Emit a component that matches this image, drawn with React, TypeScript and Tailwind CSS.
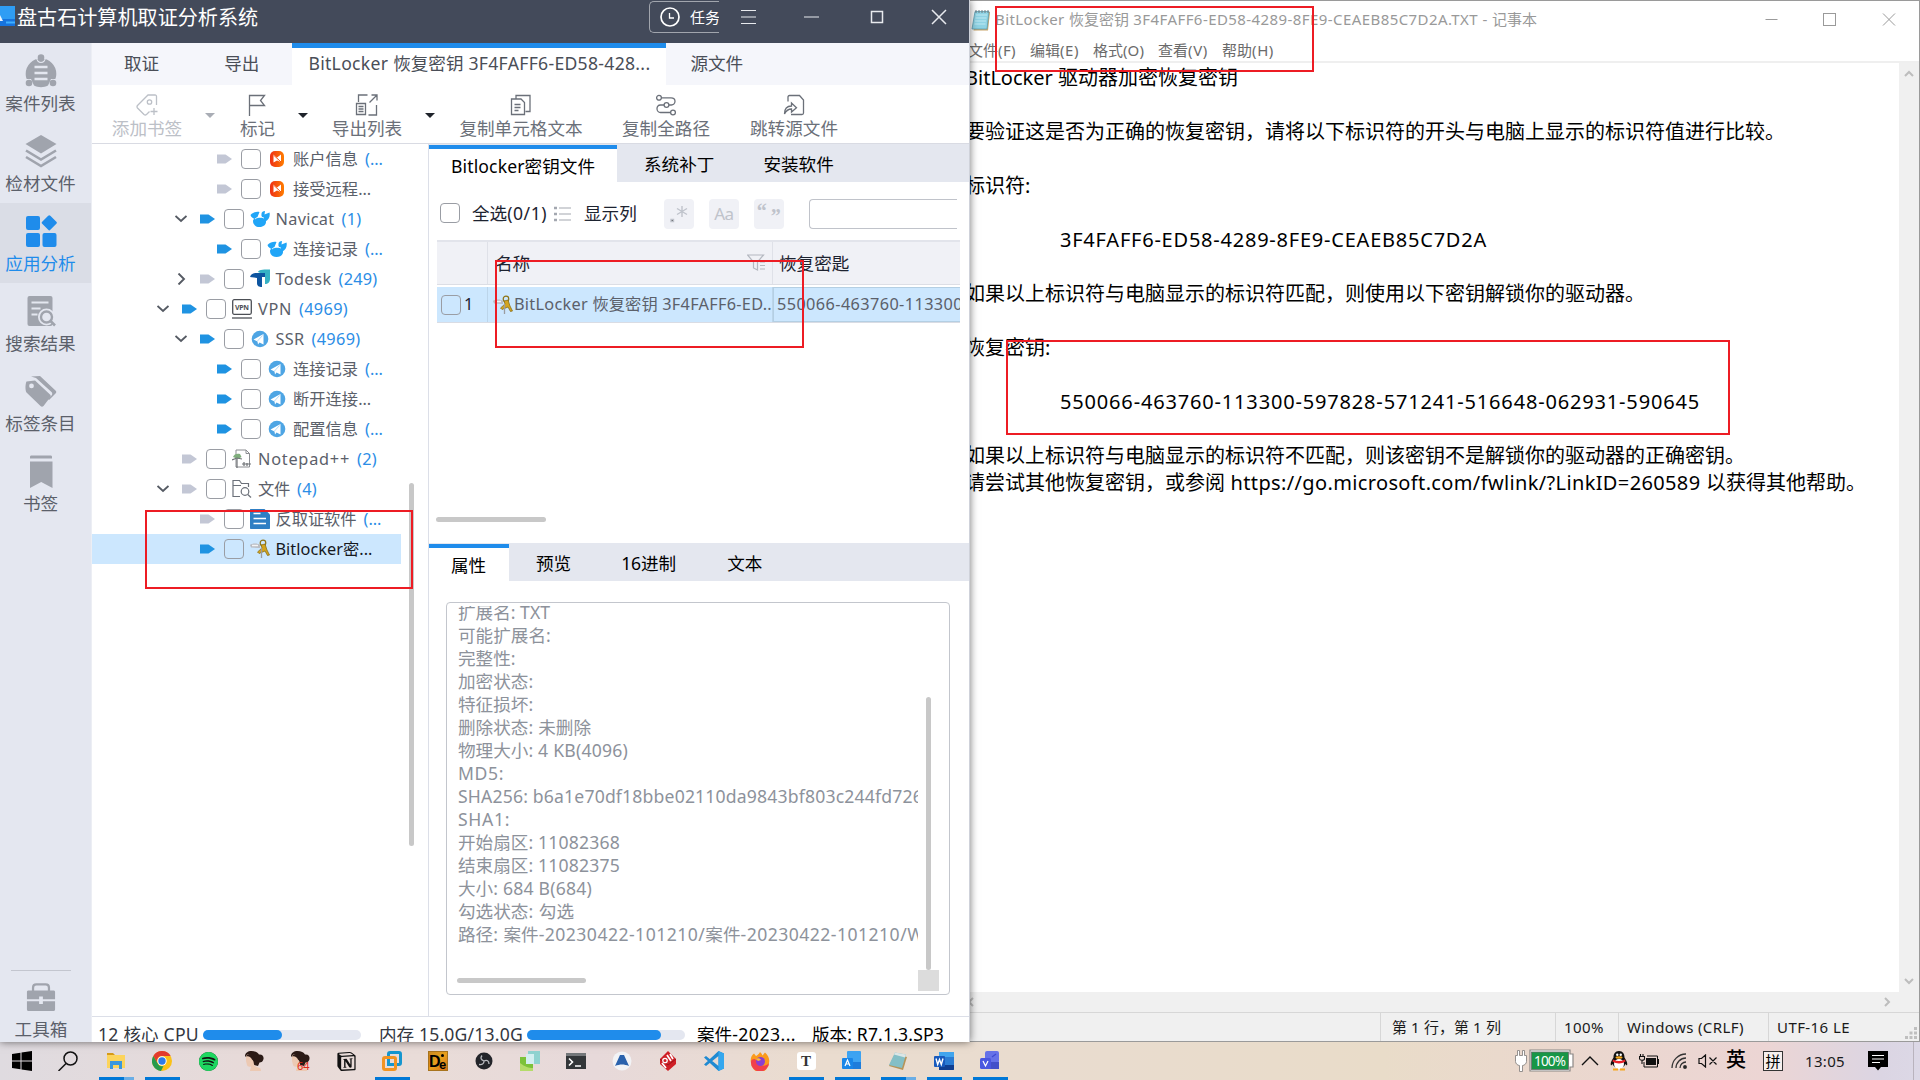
import { useLayoutEffect, useRef, useState } from "react";
import type { ReactNode } from "react";
import { SiNotion, SiSpotify } from "react-icons/si";

/** One line of text; `w` spreads the Latin runs (or all glyphs) over a fixed measure. */
function T({ t, w, c = "" }: { t: string; w?: number; c?: string }) {
  const ref = useRef<HTMLSpanElement>(null);
  const [ls, setLs] = useState(0);
  const runs = t.match(/[\x20-\x7e]+|[^\x20-\x7e]+/g) ?? [];
  const latin = runs.filter((r) => r.charCodeAt(0) < 127).join("").length;
  useLayoutEffect(() => {
    if (w && ref.current) {
      const d = w - ref.current.getBoundingClientRect().width;
      setLs(d / (latin || t.length));
    }
  }, []);
  return (
    <span ref={ref} className={"inline-block shrink-0 whitespace-pre " + c}>
      {runs.map((r, i) => {
        const spaced = !latin || r.charCodeAt(0) < 127;
        return (
          <span key={i} style={spaced ? { letterSpacing: ls } : undefined}>
            {r}
          </span>
        );
      })}
    </span>
  );
}

type P = { className?: string };

/* ---------- sidebar icons ---------- */
const CaseIcon = () => (
  <svg width="32" height="34" viewBox="0 0 32 34" fill="#a0a4ad">
    <circle cx="16" cy="3.5" r="3.3" />
    <path d="M16 4.5A15.3 15.3 0 0 0 .7 19.8c0 2 .3 3.800 1 5.200L6 25l3 6.500c2 1.200 4.500 1.700 7 1.700s5-.5 7-1.700L26 25l4.300 0c.7-1.400 1-3.200 1-5.200A15.300 15.300 0 0 0 16 4.500z" />
    <circle cx="4" cy="29" r="3.300" />
    <circle cx="28" cy="29" r="3.300" />
    <path d="M9.500 13h13M9.500 19h13M9.500 25h13" stroke="#e4e7f0" strokeWidth="2.600" />
    <path d="M11.500 2.500c0 8 9 8 9 0" fill="none" stroke="#e4e7f0" strokeWidth="1.200" />
  </svg>
);
const LayersIcon = () => (
  <svg width="32" height="34" viewBox="0 0 32 34" fill="#a0a4ad">
    <path d="M16 1l15.500 9L16 19.500.500 10z" />
    <path d="M1 16.500l15 9 15-9M1 23l15 9 15-9" fill="none" stroke="#a0a4ad" strokeWidth="2.600" />
  </svg>
);
const AppsIcon = () => (
  <svg width="32" height="34" viewBox="0 0 32 34" fill="#1f8ceb">
    <rect x="1" y="2" width="14" height="14" rx="2" />
    <rect x="1" y="19" width="14" height="14" rx="2" />
    <rect x="17.500" y="19" width="14" height="14" rx="2" />
    <rect x="18.500" y="3" width="11.500" height="11.500" rx="1.500" transform="rotate(45 24.200 8.800)" />
  </svg>
);
const SearchDocIcon = () => (
  <svg width="32" height="34" viewBox="0 0 32 34">
    <rect x="2.500" y="2" width="25" height="30" rx="2" fill="#a0a4ad" />
    <path d="M6.500 8.500h17M6.500 14.500h9M6.500 20.500h6" stroke="#e4e7f0" strokeWidth="2.200" />
    <circle cx="21.500" cy="23" r="8.500" fill="#e4e7f0" />
    <circle cx="21.500" cy="23" r="5.500" fill="none" stroke="#a0a4ad" strokeWidth="2.400" />
    <path d="M25.500 27l4.500 4.500" stroke="#a0a4ad" strokeWidth="2.600" />
  </svg>
);
const TagsIcon = () => (
  <svg width="32" height="34" viewBox="0 0 32 34" fill="#a0a4ad">
    <path d="M6 2.500L15 2l15.500 14.500c1 1 1 2 0 3L24 26l-1-1 3.500-3.500c1-1 1-2.500 0-3.500L11 4z" />
    <path d="M1.500 7.500L10 6.500l15 14c1 1 1 2 0 3L18.500 32c-1 1-2 1-3 0L1.500 18.500C0 16 .300 10 1.500 7.500zM6.500 9.500a2.400 2.400 0 1 0 0 4.800 2.400 2.400 0 0 0 0-4.800z" fillRule="evenodd" />
  </svg>
);
const BookmarkIcon = () => (
  <svg width="32" height="34" viewBox="0 0 32 34" fill="#a0a4ad">
    <path d="M5 4.500V3c0-1 .5-1.500 1.500-1.500h19c1 0 1.500.5 1.500 1.500v1.500zM5 7.500h22.500V34L16.200 28 5 34z" />
  </svg>
);
const ToolboxIcon = () => (
  <svg width="32" height="32" viewBox="0 0 32 32">
    <path d="M7.500 10V6c0-2.500 1.500-3.500 3.500-3.500h10c2 0 3.500 1 3.500 3.500v4" fill="none" stroke="#a0a4ad" strokeWidth="2.400" />
    <path d="M1 10.500c0-1 1-1.500 2-1.500h26c1 0 2 .5 2 1.500v8H18v-3h-4v3H1zM1 20.500h13v3h4v-3h13V29c0 1.500-1 2-2 2H3c-1 0-2-.5-2-2z" fill="#a0a4ad" />
  </svg>
);

/* ---------- toolbar icons ---------- */
const line = { fill: "none", stroke: "#6b7079", strokeWidth: 1.3 };
const AddTag = () => (
  <svg width="22" height="22" viewBox="0 0 22 22" {...line} stroke="#bcc0c7">
    <path d="M20.500 11V2.500c0-1-.5-1.500-1.500-1.500h-7L1.500 11.500c-.8 1-.8 1.500 0 2.500l6.500 6.500c1 .8 1.500.8 2.500 0l3-3M18 14v7M14.500 17.500h7" />
    <circle cx="13.500" cy="8" r="2.200" />
  </svg>
);
const Flag = () => (
  <svg width="22" height="22" viewBox="0 0 22 22" {...line}>
    <path d="M2.500 22V1.500h15l-4 5 4 5h-15" />
  </svg>
);
const ExportIcon = () => (
  <svg width="24" height="22" viewBox="0 0 24 22" {...line}>
    <path d="M3.500 8V1h9M21.500 11v10h-8M14.500 8.500L22 1M16.500 1H22v5.500M1.500 9.500h9v11h-9zM3.500 12.500h5M3.500 15h5M3.500 17.500h5" />
  </svg>
);
const CopyIcon = () => (
  <svg width="22" height="22" viewBox="0 0 22 22" {...line}>
    <path d="M6 4.500V1.500h14v16h-4.500M1.500 5h9.500l3.500 3.500v12h-13zM4.500 10.500h6M4.500 13.500h6M4.500 16.500h4" />
  </svg>
);
const PathIcon = () => (
  <svg width="22" height="22" viewBox="0 0 22 22" {...line}>
    <circle cx="4" cy="3.800" r="2.400" />
    <circle cx="11.500" cy="11" r="2.400" />
    <circle cx="18" cy="18.500" r="2.400" />
    <path d="M6.500 3.800H16c2 0 4 1 4 3.500S18 11 16.500 11H14M9 11H5.500C3 11 2 12.800 2 14.700s1.500 3.800 3.500 3.800h10" />
  </svg>
);
const JumpIcon = () => (
  <svg width="22" height="22" viewBox="0 0 22 22" {...line}>
    <path d="M5 7.500V3c0-1 .5-1.500 1.500-1.500h10l4 4.500V19c0 1-.5 1.500-1.500 1.500H8M1.500 20c0-5 2-8 7-8V9l5 4.800-5 4.200v-3c-3.500 0-5.500 2-7 5z" />
  </svg>
);
const Caret = ({ c }: { c: string }) => (
  <svg width="10" height="5" viewBox="0 0 10 5" className="mt-[3px] shrink-0">
    <path d="M0 0h10L5 5z" fill={c} />
  </svg>
);

/* ---------- tree icons ---------- */
const Sun = () => (
  <svg width="20" height="20" viewBox="0 0 20 20">
    <defs>
      <linearGradient id="sun" x1="0" x2="1"><stop offset="0" stopColor="#ee2f14" /><stop offset="1" stopColor="#ff7d00" /></linearGradient>
    </defs>
    <rect x="3" y="2" width="14" height="16" rx="5" fill="url(#sun)" />
    <path d="M6.500 5.500l3.500 3 4-3V13l-4-1.500-3.500 2z" fill="#fff" />
    <path d="M6.500 6l7.500 7" stroke="#f4510b" strokeWidth="1" />
  </svg>
);
const Navicat = () => (
  <svg width="20" height="20" viewBox="0 0 20 20" fill="#20a5f7">
    <path d="M.500 6C3 3 7 2.500 9.500 3L7.500 8 5 10C3 9.500 1 8 .500 6zM11.500 6C11 3.500 13 2 15 2l-.5 3.500 5-2c1 4-1 7.500-4 9C13 8 11 8 11.500 6z" />
    <path d="M3 12c0-2 3-3.500 7-3.500s6 2 6 4.500-2.500 5-6.500 5S3 15.500 3 12z" />
    <path d="M5 10c2-2 6-2.500 9-1" fill="none" stroke="#fff" strokeWidth=".8" />
  </svg>
);
const Todesk = () => (
  <svg width="20" height="20" viewBox="0 0 20 20">
    <path d="M8 3c1-2 3-2.500 12-2.500V10c0 3-2 5-5 5V6z" fill="#36b1c4" />
    <path d="M0 8c1-3 3-4 6-4h9v4h-3v10c-3 0-5-1-5-4V9z" fill="#0d55a0" />
  </svg>
);
const Vpn = () => (
  <svg width="20" height="20" viewBox="0 0 20 20" fill="none" stroke="#4c4f55" strokeWidth="1.300">
    <rect x=".7" y=".7" width="18.600" height="14.600" rx="1.500" />
    <path d="M0 19h20" />
    <text x="10" y="10.500" textAnchor="middle" fontSize="7" fontWeight="700" fill="#4c4f55" stroke="none" textLength="14">VPN</text>
  </svg>
);
const Plane = () => (
  <svg width="20" height="20" viewBox="0 0 20 20">
    <circle cx="10" cy="10" r="8.300" fill="#4ea5e4" />
    <path d="M3.500 10.500l10-5.500v10.500l-4-2-1.500 2-.5-3z" fill="#fff" />
    <path d="M7.500 12l5-5.500" stroke="#9fcdf0" strokeWidth=".8" />
  </svg>
);
const Npp = () => (
  <svg width="20" height="20" viewBox="0 0 20 20">
    <path d="M4 1h10l3.500 3.500V18H4z" fill="#fff" stroke="#8b8d91" />
    <path d="M14 1v3.500h3.500" fill="none" stroke="#8b8d91" />
    <path d="M1 8c1-3 4-4 7-3l1.500 3L6 10z" fill="#7fae7c" />
    <path d="M0 11l5-2 5 1M5 10v9M10 15h9M12 13v4M15 14v3" fill="none" stroke="#6f7276" strokeWidth="1.200" />
  </svg>
);
const FolderSearch = () => (
  <svg width="20" height="20" viewBox="0 0 20 20" fill="none" stroke="#6b7079" strokeWidth="1.200">
    <path d="M8 17.500H1V1.500h6.500l2 3h7V8M1 6.500h8" />
    <circle cx="13" cy="12.500" r="3.800" />
    <path d="M15.800 15.500L19 18.500" />
  </svg>
);
const BlueDoc = () => (
  <svg width="20" height="20" viewBox="0 0 20 20">
    <path d="M0 1C0 0 .5-.5 1.500-.5H14l6 6V19c0 .7-.3 1-1 1H1c-.7 0-1-.3-1-1z" fill="#2f7fc4" />
    <path d="M3.500 4.500h7M3.500 9.500h12.500M3.500 14.500h12.500" stroke="#fff" strokeWidth="1.700" />
  </svg>
);
const Keys = () => (
  <svg width="20" height="20" viewBox="0 0 20 20">
    <path d="M0 6c2-2 8-2 10 0v3L1 8.500z" fill="#b9bcc2" />
    <path d="M2 6.500h6" stroke="#f3f4f6" strokeWidth="1.500" />
    <circle cx="13" cy="4" r="2.800" fill="none" stroke="#8e7416" strokeWidth="1.200" />
    <path d="M11 6l4-1 2 6 2.500 5-2 .5L15 12l-6 2.500-1.500-1.500L12 9z" fill="#d3a41e" stroke="#80660f" strokeWidth=".7" />
    <path d="M11.500 9v10" stroke="#9b9da0" strokeWidth="1.300" />
  </svg>
);

const Box = ({ className = "" }: P) => (
  <span className={"block h-5 w-5 shrink-0 rounded-[4px] border-[1.500px] border-[#9a9da4] " + className} />
);

type Row = { lv: number; ch?: "d" | "r"; on: boolean; ic: ReactNode; n: string; w: number; c?: string; cw?: number; sel?: boolean };
const rows: Row[] = [
  { lv: 2, on: false, ic: <Sun />, n: "账户信息", w: 65, c: "(...", cw: 18 },
  { lv: 2, on: false, ic: <Sun />, n: "接受远程...", w: 78 },
  { lv: 1, ch: "d", on: true, ic: <Navicat />, n: "Navicat", w: 59, c: "(1)", cw: 20 },
  { lv: 2, on: true, ic: <Navicat />, n: "连接记录", w: 65, c: "(...", cw: 18 },
  { lv: 1, ch: "r", on: false, ic: <Todesk />, n: "Todesk", w: 56, c: "(249)", cw: 39 },
  { lv: 0, ch: "d", on: true, ic: <Vpn />, n: "VPN", w: 34, c: "(4969)", cw: 49 },
  { lv: 1, ch: "d", on: true, ic: <Plane />, n: "SSR", w: 29, c: "(4969)", cw: 49 },
  { lv: 2, on: true, ic: <Plane />, n: "连接记录", w: 65, c: "(...", cw: 18 },
  { lv: 2, on: true, ic: <Plane />, n: "断开连接...", w: 78 },
  { lv: 2, on: true, ic: <Plane />, n: "配置信息", w: 65, c: "(...", cw: 18 },
  { lv: 0, on: false, ic: <Npp />, n: "Notepad++", w: 92, c: "(2)", cw: 20 },
  { lv: 0, ch: "d", on: false, ic: <FolderSearch />, n: "文件", w: 32, c: "(4)", cw: 20 },
  { lv: 1, on: false, ic: <BlueDoc />, n: "反取证软件", w: 81, c: "(...", cw: 18 },
  { lv: 1, on: true, ic: <Keys />, n: "Bitlocker密...", w: 97, sel: true },
];
const pads = ["pl-[65px]", "pl-[82.500px]", "pl-[100px]"];

function Tree() {
  return (
    <div className="relative flex w-[337px] shrink-0 flex-col border-r border-[#dcdfe8] text-[16.300px] text-[#5b606a]">
      {rows.map((r, i) => (
        <div key={i} className={"flex h-[30px] w-[309px] shrink-0 items-center " + pads[r.lv] + (r.sel ? " bg-[#cce7fe] text-[#15181d]" : "")}>
          <svg width="12" height="12" viewBox="0 0 12 12" className="mr-[13px] shrink-0" fill="none" stroke="#555a63" strokeWidth="1.900">
            {r.ch === "d" && <path d="M.5 3l5.500 5 5.500-5" />}
            {r.ch === "r" && <path d="M3.500.500L9 6l-5.500 5.500" />}
          </svg>
          <svg width="15" height="10" viewBox="0 0 15 10" className="mr-[9px] shrink-0">
            <path d="M0 .5h8.500L15 5 8.500 9.500H0z" fill={r.on ? "#1f93e2" : "#c3c7d5"} />
          </svg>
          <Box className="mr-[6px]" />
          <span className="mr-[6px] shrink-0">{r.ic}</span>
          <T t={r.n} w={r.w} />
          {r.c && <T t={r.c} w={r.cw} c="ml-[7px] text-[#2b8de6]" />}
        </div>
      ))}
      <div className="absolute left-[317px] top-[339px] h-[363px] w-[5px] rounded-full bg-[#c8c8c8]" />
    </div>
  );
}

const Sidebar = () => {
  const items: [ReactNode, string][] = [
    [<CaseIcon />, "案件列表"],
    [<LayersIcon />, "检材文件"],
    [<AppsIcon />, "应用分析"],
    [<SearchDocIcon />, "搜索结果"],
    [<TagsIcon />, "标签条目"],
    [<BookmarkIcon />, "书签"],
  ];
  return (
    <div className="flex w-[91px] shrink-0 flex-col bg-[#e4e7f0] text-[17.600px] text-[#5b606a]">
      {items.map(([ic, t], i) => (
        <div key={t} className={"flex h-20 w-full shrink-0 flex-col items-center pr-[10px] pt-[11px] " + (i === 2 ? "bg-[#dadde6] text-[#1f8ceb]" : "")}>
          {ic}
          <span className="mt-[2px] leading-[26px]">{t}</span>
        </div>
      ))}
      <div className="ml-[11px] mt-[447px] h-px w-[60px] shrink-0 bg-[#c3c6cf]" />
      <div className="flex h-[71px] shrink-0 flex-col items-center overflow-hidden pr-[9px] pt-[11px]">
        <ToolboxIcon />
        <span className="mt-[4px] leading-[26px]">工具箱</span>
      </div>
    </div>
  );
};

const Tool = ({ c, ic, t, dim }: { c: string; ic: ReactNode; t: string; dim?: boolean }) => (
  <div className={"flex shrink-0 flex-col items-center pt-[6px] " + c + (dim ? " text-[#bcc0c7]" : " text-[#6b7079]")}>
    {ic}
    <span className="-mt-px whitespace-nowrap text-[17.600px] leading-[26px]">{t}</span>
  </div>
);

const props: [string, number?][] = [
  ["扩展名: TXT", 92],
  ["可能扩展名:"],
  ["完整性:"],
  ["加密状态:"],
  ["特征损坏:"],
  ["删除状态: 未删除", 133],
  ["物理大小: 4 KB(4096)", 170],
  ["MD5:", 46],
  ["SHA256: b6a1e70df18bbe02110da9843bf803c244fd726", 465],
  ["SHA1:", 52],
  ["开始扇区: 11082368", 162],
  ["结束扇区: 11082375", 162],
  ["大小: 684 B(684)", 134],
  ["勾选状态: 勾选", 116],
  ["路径: 案件-20230422-101210/案件-20230422-101210/W", 466],
];

const MiniBtn = ({ children }: { children: ReactNode }) => (
  <span className="mr-[15px] flex h-[30px] w-[30px] shrink-0 items-center justify-center rounded-[4px] bg-[#f0f1f6] text-[17px] text-[#bfc3cb]">{children}</span>
);

function Detail() {
  return (
    <div className="flex w-[541px] shrink-0 flex-col text-[17.600px] text-[#1d2330]">
      <div className="flex h-[38px] shrink-0 bg-[#e4e7ef] leading-[40px] text-black">
        <div className="mt-px h-[37px] w-[188px] shrink-0 border-t-[4px] border-[#1f8ceb] bg-white pl-[22px] leading-[34px]">
          <T t="Bitlocker密钥文件" w={144} />
        </div>
        <span className="ml-[27px]">系统补丁</span>
        <span className="ml-[49px]">安装软件</span>
      </div>
      <div className="flex h-[58px] shrink-0 items-center pl-[11px] pt-[5px]">
        <Box className="-mt-[2px]" />
        <T t="全选(0/1)" w={75} c="ml-[12px]" />
        <svg width="17" height="16" viewBox="0 0 17 16" className="ml-[7px] shrink-0" stroke="#a3a7b0" strokeWidth="1.200">
          <path d="M5 2h12M5 8h12M5 14h12" />
          <path d="M0 2h3M0 8h3M0 14h3" strokeWidth="2.600" />
        </svg>
        <span className="ml-[13px] mr-[27px] shrink-0">显示列</span>
        <MiniBtn>
          <svg width="20" height="20" viewBox="0 0 20 20" stroke="#bfc3cb" strokeWidth="1.400">
            <path d="M13 2v11M8 4.500l10 6M18 4.500l-10 6M2 15.500h2.500v2H2z" />
          </svg>
        </MiniBtn>
        <MiniBtn>
          <T t="Aa" w={19} />
        </MiniBtn>
        <MiniBtn>
          <span className="flex font-['Liberation_Serif'] text-[20px] font-bold leading-[20px]">
            <span className="-mt-[1px]">“</span>
            <span className="ml-[4px] mt-[4px]">”</span>
          </span>
        </MiniBtn>
        <span className="ml-[10px] h-[30px] w-[148px] shrink-0 rounded-l-[4px] border border-r-0 border-[#c0c3ca]" />
      </div>
      <div className="ml-[8px] w-[523px] shrink-0 overflow-hidden">
        <div className="flex h-[45px] border-b border-t-2 border-b-[#dcdee5] border-t-[#e2e4eb] bg-[#f0f1f6]">
          <div className="w-[51px] shrink-0 border-r border-[#dfe1e8]" />
          <div className="flex w-[285px] shrink-0 items-center justify-between border-r border-[#dfe1e8] pl-[7px] pr-[7px] pt-px">
            名称
            <svg width="18" height="17" viewBox="0 0 18 17" fill="none" stroke="#b4b8c0" strokeWidth="1.200" className="-mt-[2px]">
              <path d="M.5 1h16l-6 7v8l-4-2V8zM13 8h5M13 11.500h5M13 15h5" />
            </svg>
          </div>
          <div className="flex items-center pl-[6px] pt-px">恢复密匙</div>
        </div>
        <div className="mt-[2px] flex h-[36px] border-b border-[#d9dce4] bg-[#cce7fe] text-[16.300px] text-[#5b606a]">
          <div className="flex w-[51px] shrink-0 items-center border-r border-[#bcd5ea] pl-[4px]">
            <Box />
            <span className="ml-[3px] text-[#1d2330]">1</span>
          </div>
          <div className="flex w-[285px] shrink-0 items-center border-r border-[#bcd5ea] pl-[5px]">
            <Keys />
            <T t="BitLocker 恢复密钥 3F4FAFF6-ED.." w={258} c="ml-[1px]" />
          </div>
          <div className="flex w-[200px] shrink-0 items-center border border-[#b4cfe3] pl-[3px]">
            <T t="550066-463760-113300" w={186} />
          </div>
        </div>
      </div>
      <div className="ml-[7px] mt-[194px] h-[5px] w-[110px] shrink-0 rounded-full bg-[#c8c8c8]" />
      <div className="mt-[21px] flex h-[38px] shrink-0 bg-[#e4e7ef] leading-[40px] text-black">
        <div className="mt-px w-20 shrink-0 border-t-[4px] border-[#1f8ceb] bg-white pl-[22px] leading-[34px]">属性</div>
        <span className="ml-[27px]">预览</span>
        <T t="16进制" w={55} c="ml-[50px]" />
        <span className="ml-[51px]">文本</span>
      </div>
      <div className="relative ml-[17px] mt-[21px] h-[393px] w-[504px] shrink-0 rounded-[4px] border border-[#c3c6cd] pl-[11px] pt-[3px] text-[#8d929b]">
        <div className="flex h-[360px] w-[460px] flex-col overflow-hidden">
          {props.map(([t, w], i) => (
            <div key={i} className={"h-[23px] shrink-0 leading-[23px] " + (i ? "" : "-mt-[5.500px]")}>
              <T t={t} w={w} />
            </div>
          ))}
        </div>
        <div className="absolute left-[479px] top-[94px] h-[273px] w-[5px] rounded-full bg-[#c8c8c8]" />
        <div className="absolute left-[471px] top-[367px] h-[21px] w-[21px] bg-[#dcdcdc]" />
        <div className="absolute left-[10px] top-[375px] h-[5px] w-[129px] rounded-full bg-[#c8c8c8]" />
      </div>
    </div>
  );
}

const Meter = ({ c, f }: { c: string; f: string }) => (
  <div className={"h-[10px] w-[158px] shrink-0 rounded-full bg-[#e4e7f0] " + c}>
    <div className={"h-full rounded-full bg-[#1f8ceb] " + f} />
  </div>
);

function Forensics() {
  return (
    <div className="relative z-10 flex h-[1042px] w-[970px] shrink-0 flex-col overflow-hidden border-r border-[#cfd2da] bg-white shadow-[0_0_8px_rgba(0,0,0,0.55)]">
      <div className="flex h-[43px] shrink-0 bg-[#434a5a] text-white">
        <svg width="15" height="22" viewBox="0 0 15 22" className="mt-[5px] shrink-0">
          <rect x="-4" y="1" width="19" height="15" fill="#2f9df4" />
          <rect x="-4" y="14" width="19" height="7" fill="#1673de" />
          <path d="M0 16V10l3 6z" fill="#e8f4ff" />
          <path d="M6 17.500h9" stroke="#3fb0ff" strokeWidth="2" />
        </svg>
        <span className="ml-[2px] w-[632px] shrink-0 text-[20.100px] leading-[36px]">盘古石计算机取证分析系统</span>
        <div className="mt-px flex h-[32px] w-[70px] shrink-0 items-center overflow-hidden rounded-l-[5px] border border-r-0 border-[#a1a5ad] pl-[10px] text-[15px]">
          <svg width="20" height="20" viewBox="0 0 20 20" fill="none" stroke="#fff" strokeWidth="1.700" className="shrink-0">
            <circle cx="10" cy="10" r="9" />
            <path d="M9.500 6v5H14" strokeWidth="1.300" />
          </svg>
          <span className="ml-[10px] shrink-0 whitespace-nowrap">任务</span>
        </div>
        <svg width="220" height="34" viewBox="0 0 220 34" fill="none" stroke="#e8eaee" strokeWidth="1.500" className="ml-[20px] shrink-0">
          <path d="M2 10.500h15M2 17h15M2 23.500h15M65 17h15" strokeWidth="1.200" />
          <rect x="132.500" y="11.500" width="11" height="11" />
          <path d="M193 10l14 14M207 10l-14 14" />
        </svg>
      </div>
      <div className="flex min-h-0 flex-1">
        <Sidebar />
        <div className="flex min-w-0 flex-1 flex-col border-l border-[#eceef4]">
          <div className="flex h-[42px] shrink-0 bg-[#f5f6fb] text-[17.600px] leading-[40px] text-[#4a4e57]">
            <span className="ml-[32px]">取证</span>
            <span className="ml-[65px]">导出</span>
            <div className="ml-[33px] w-[374px] shrink-0 border-t-[5px] border-[#1f8ceb] bg-white pl-[16px] leading-[30px]">
              <T t="BitLocker 恢复密钥 3F4FAFF6-ED58-428..." w={342} />
            </div>
            <span className="ml-[24px]">源文件</span>
          </div>
          <div className="flex h-[59px] shrink-0 items-center border-b border-[#d9dbe3]">
            <Tool c="w-[110px]" ic={<AddTag />} t="添加书签" dim />
            <div className="flex w-[16px] justify-center"><Caret c="#a9adb5" /></div>
            <Tool c="w-[79px]" ic={<Flag />} t="标记" />
            <div className="flex w-[12px] justify-center"><Caret c="#1f232b" /></div>
            <Tool c="w-[116px]" ic={<ExportIcon />} t="导出列表" />
            <div className="flex w-[10px] justify-center"><Caret c="#1f232b" /></div>
            <Tool c="w-[172px]" ic={<CopyIcon />} t="复制单元格文本" />
            <Tool c="w-[118px]" ic={<PathIcon />} t="复制全路径" />
            <Tool c="w-[138px]" ic={<JumpIcon />} t="跳转源文件" />
          </div>
          <div className="flex h-[872px] shrink-0">
            <Tree />
            <Detail />
          </div>
          <div className="flex h-[26px] shrink-0 items-start overflow-hidden border-t border-[#dcdfe8] pl-[6px] text-[17.600px] leading-[34px] text-[#33373f]">
            <T t="12 核心 CPU" w={101} />
            <Meter c="ml-[4px] mt-[13px]" f="w-[79px]" />
            <T t="内存 15.0G/13.0G" w={144} c="ml-[18px]" />
            <Meter c="ml-[4px] mt-[13px]" f="w-[134px]" />
            <T t="案件-2023..." w={99} c="ml-[12px] text-black" />
            <T t="版本: R7.1.3.SP3" w={132} c="ml-[16px] text-black" />
          </div>
        </div>
      </div>
    </div>
  );
}

/* ---------- Notepad ---------- */
const body: [string, number?, string?][] = [
  ["BitLocker 驱动器加密恢复密钥", 273],
  [""],
  ["要验证这是否为正确的恢复密钥，请将以下标识符的开头与电脑上显示的标识符值进行比较。"],
  [""],
  ["标识符:"],
  [""],
  ["3F4FAFF6-ED58-4289-8FE9-CEAEB85C7D2A", 427, "pl-[95px]"],
  [""],
  ["如果以上标识符与电脑显示的标识符匹配，则使用以下密钥解锁你的驱动器。"],
  [""],
  ["恢复密钥:"],
  [""],
  ["550066-463760-113300-597828-571241-516648-062931-590645", 640, "pl-[95px]"],
  [""],
  ["如果以上标识符与电脑显示的标识符不匹配，则该密钥不是解锁你的驱动器的正确密钥。"],
  ["请尝试其他恢复密钥，或参阅 https://go.microsoft.com/fwlink/?LinkID=260589 以获得其他帮助。", 901],
];

function NotepadIcon() {
  return (
    <svg width="20" height="22" viewBox="0 0 20 22" className="shrink-0">
      <path d="M5 3h14l-2 18.500H2.500z" fill="#c9a56a" />
      <path d="M4 2.500h14L16 20H1z" fill="#8fd3e4" stroke="#5d9fb3" strokeWidth=".8" />
      <path d="M5 6h11M4.500 9h11M4 12h11M3.500 15h11" stroke="#bfe8f2" />
      <path d="M5 1v3M8 1v3M11 1v3M14 1v3M17 1v3" stroke="#6e7b80" />
    </svg>
  );
}

function Notepad() {
  return (
    <div className="-ml-[5px] flex h-[1042px] w-[955px] shrink-0 flex-col border-b border-r border-t border-[#9a9a9a] bg-white text-[15px]">
      <div className="flex h-[37px] shrink-0 items-center pl-[6px] text-[#999]">
        <NotepadIcon />
        <T t="BitLocker 恢复密钥 3F4FAFF6-ED58-4289-8FE9-CEAEB85C7D2A.TXT - 记事本" w={542} c="ml-[4px] mr-auto" />
        <svg width="150" height="30" viewBox="0 0 150 30" fill="none" stroke="#9a9a9a" className="mr-[20px]">
          <path d="M16.500 14.500h12M134 8.500l12 12M146 8.500l-12 12" />
          <rect x="74.500" y="8.500" width="12" height="12" />
        </svg>
      </div>
      <div className="flex h-[25px] shrink-0 items-center gap-[14px] border-b-2 border-[#efefef] pl-[3px] pt-px text-[#6b6b6b]">
        <T t="文件(F)" w={48} />
        <T t="编辑(E)" w={49} />
        <T t="格式(O)" w={51} />
        <T t="查看(V)" w={50} />
        <T t="帮助(H)" w={52} />
      </div>
      <div className="flex min-h-0 flex-1">
        <div className="flex-1 overflow-hidden pt-px text-[20px] leading-[27px] text-black">
          {body.map(([t, w, c], i) => (
            <div key={i} className={"h-[27px] " + (c ?? "")}>
              {t && <T t={t} w={w} />}
            </div>
          ))}
        </div>
        <div className="flex w-[20px] shrink-0 flex-col items-center justify-between bg-[#f0f0f0] py-[7px]">
          <svg width="10" height="7" viewBox="0 0 10 7" fill="none" stroke="#bdbdbd" strokeWidth="2"><path d="M1 6l4-4 4 4" /></svg>
          <svg width="10" height="7" viewBox="0 0 10 7" fill="none" stroke="#bdbdbd" strokeWidth="2"><path d="M1 1l4 4 4-4" /></svg>
        </div>
      </div>
      <div className="flex h-[20px] shrink-0 items-center justify-between bg-[#f0f0f0] pl-[2px] pr-[28px]">
        <svg width="7" height="10" viewBox="0 0 7 10" fill="none" stroke="#bdbdbd" strokeWidth="2"><path d="M6 1L2 5l4 4" /></svg>
        <svg width="7" height="10" viewBox="0 0 7 10" fill="none" stroke="#bdbdbd" strokeWidth="2"><path d="M1 1l4 4-4 4" /></svg>
      </div>
      <div className="flex h-[29px] shrink-0 border-t border-[#d7d7d7] bg-[#f0f0f0] leading-[28px] text-[#1a1a1a]">
        <div className="w-[415px] shrink-0" />
        <div className="w-[175px] shrink-0 border-l border-[#d7d7d7] pl-[11px]"><T t="第 1 行，第 1 列" w={109} /></div>
        <div className="w-[63px] shrink-0 border-l border-[#d7d7d7] pl-[8px]"><T t="100%" w={40} /></div>
        <div className="w-[150px] shrink-0 border-l border-[#d7d7d7] pl-[8px]"><T t="Windows (CRLF)" w={117} /></div>
        <div className="flex flex-1 items-center justify-between border-l border-[#d7d7d7] pl-[8px] pr-[2px]">
          <T t="UTF-16 LE" w={73} />
          <svg width="12" height="12" viewBox="0 0 12 12" fill="#bfbfbf" className="mt-[11px]">
            <path d="M9 0h3v3H9zM9 4.500h3v3H9zM9 9h3v3H9zM4.500 4.500h3v3h-3zM4.500 9h3v3h-3zM0 9h3v3H0z" />
          </svg>
        </div>
      </div>
    </div>
  );
}

/* ---------- Taskbar ---------- */
const S = ({ children }: { children: ReactNode }) => (
  <svg width="20" height="20" viewBox="0 0 20 20">{children}</svg>
);
const Ida = ({ n }: { n?: boolean }) => (
  <span className="relative block h-5 w-5">
    <S>
      <path d="M1 5c0-3 3-5 6.500-5C11 0 14 1.500 15 3.500c3-.5 5 1.500 4.500 4.500-.5 2.500-2 3.500-4 3.500L14 15l-4-1z" fill="#2b1a16" />
      <path d="M2 5c1-2 4-2 5.500.5L9 9c1 2 .5 4 1.500 5.500 1.500 1.500 4 2 6 3l.5 2.500H6c0-2 1.500-3 1-4.500-2 .5-3.500 0-4-1.500L2 10z" fill="#ecc9b3" />
      <path d="M2 5.500C3 2.500 8 2 10 5l.5 6L8 8.500C7 6 4.500 4.500 2 5.500z" fill="#2b1a16" />
    </S>
    {n && <span className="absolute left-[7px] top-[10px] text-[11px] leading-[10px] text-[#e02a1a]">64</span>}
  </span>
);

const apps: [ReactNode, number][] = [
  [<S><path d="M0 3l8.500-1.300v7.800H0zM9.500 1.500L20 0v9.500H9.500zM0 10.500h8.500v7.800L0 17zM9.500 10.500H20V20L9.500 18.500z" fill="#000" /></S>, 0],
  [<S><g fill="none" stroke="#111" strokeWidth="1.500"><circle cx="12.500" cy="7.500" r="6.500" /><path d="M8 12.500L.500 20" /></g></S>, 0],
  [<S><path d="M1 2h6l2 2h-8z" fill="#d69a18" /><path d="M1 4h18v13H1z" fill="#fcd45c" /><path d="M4 10h12v8h-3v-4H7v4H4z" fill="#3a97dd" /></S>, 2],
  [<S>
    <circle cx="10" cy="10" r="10" fill="#fbc116" />
    <path d="M10 0a10 10 0 0 1 8.700 5H10a5 5 0 0 0-4.500 7.200L1.300 5A10 10 0 0 1 10 0z" fill="#e33b2e" />
    <path d="M1.300 5l4.400 7.500A5 5 0 0 0 11.500 15L9 20A10 10 0 0 1 1.300 5z" fill="#269a4b" />
    <circle cx="10" cy="10" r="4.700" fill="#fff" /><circle cx="10" cy="10" r="3.700" fill="#2d7be8" />
  </S>, 1],
  [<span className="block rounded-full bg-[#111]"><SiSpotify size={19} color="#1ed760" /></span>, 0],
  [<Ida />, 0],
  [<Ida n />, 0],
  [<SiNotion size={19} color="#111" />, 0],
  [<S><rect x="6.500" y="1.500" width="12" height="12" rx="1.500" fill="none" stroke="#1596cf" strokeWidth="3" /><rect x="1.500" y="6.500" width="12" height="12" rx="1.500" fill="none" stroke="#f29422" strokeWidth="3" /><path d="M6.500 8v5.500H12" fill="none" stroke="#1596cf" strokeWidth="3" /></S>, 1],
  [<span className="relative block h-5 w-5 border border-[#a8741e] bg-gradient-to-br from-[#c98a22] via-[#e8a01c] to-[#d8701a] font-['Liberation_Sans'] font-black text-black">
    <span className="absolute left-0 top-[2px] text-[16px] leading-[16px]">D</span>
    <span className="absolute left-[10px] top-[6px] text-[13px] leading-[13px]">e</span>
    <span className="absolute left-[12px] top-[2px] h-[3px] w-[3px] rounded-full bg-black" />
  </span>, 0],
  [<S><circle cx="10" cy="10" r="8.500" fill="#23252a" /><g fill="none" stroke="#b9bbc0" strokeWidth="1.300"><path d="M10 10c-3-1-4-3-2-5.500M10 10c0 3-2 4-5 3.500M10 10c3-1.500 5 0 5 3" /></g></S>, 0],
  [<S><rect x="8" y="0" width="12" height="13" fill="#8fd3d0" /><rect x="0" y="6" width="13" height="14" fill="#7cc23a" /><path d="M0 20v-8c5 4 9 5 13 5v3z" fill="#b4dc6a" /><rect x="6" y="3" width="8" height="10" fill="#d3eff0" /></S>, 0],
  [<S><rect y="2" width="20" height="16" fill="#333639" /><rect y="2" width="20" height="3" fill="#75787b" /><path d="M3 7.500L6.500 11 3 14.500M9 15h6" fill="none" stroke="#fff" strokeWidth="1.600" /></S>, 0],
  [<S><circle cx="10" cy="10" r="9.500" fill="#f2f3f6" /><path d="M8 4h4l5 11c-5-2-9-2-14 0z" fill="#2a62ad" /></S>, 0],
  [<S><path d="M10 0l8 8v5l-8 7-8-7V8z" fill="#cf1f26" /><path d="M2 8l8 6 8-6" fill="none" stroke="#8e1218" strokeWidth=".8" /><path d="M9 4l4 6M12 3l3 5M4 12l4 5" stroke="#fff" strokeWidth="1.700" /><circle cx="7" cy="9.500" r="2.200" fill="none" stroke="#fff" strokeWidth="1.300" /></S>, 0],
  [<S><path d="M14.500 0L20 2.500v15L14.500 20 0 6.500 2 5l12.500 10V5L2 15l-2-1.500z" fill="#1f8ad2" /><path d="M14.500 0L20 2.500v15L14.500 20z" fill="#35a7ee" /></S>, 0],
  [<S><path d="M10 1c1 1 2 2 2.500 3.500L15 1.500c3 3 5 6 4 10.500a9 9 0 0 1-18 0C0 8 1.500 4 4 2.500L6 5c1-.5 3-2 4-4z" fill="#fb9a1c" /><path d="M1 11a9 9 0 0 0 18 1c-3 4-9 3-11 0L5 8C2 8 1 9 1 11z" fill="#f1404a" /><circle cx="10.500" cy="10.500" r="4.500" fill="#8a3fd0" /><path d="M6 8c2-1.500 4-1 5 1l-3 1z" fill="#fdbb3a" /></S>, 0],
  [<span className="flex h-[18px] w-[19px] items-center justify-center rounded-[3px] bg-white font-['Liberation_Serif'] text-[15px] font-bold leading-none text-[#333]">T</span>, 1],
  [<S><rect x="5" y="0" width="14" height="12" rx="1" fill="#3da3f2" /><path d="M8 11h11v7H8z" fill="#1f7ddb" /><rect x="0" y="7" width="11" height="11" rx="1" fill="#1a86e8" /><path d="M3 15l2.500-6L8 15M4 13h3" fill="none" stroke="#fff" strokeWidth="1.200" /></S>, 1],
  [<S><path d="M7 3l12 3-4 13L1 15z" fill="#b79357" /><path d="M7 1.500l11 2L14 17 1 14z" fill="#84bfc6" /><path d="M7 1.500l11 2-1 3-11-3z" fill="#dbe6e6" /></S>, 2],
  [<S><rect x="5" y="1" width="15" height="18" rx="1" fill="#2b7cd3" /><path d="M5 1h15v5H5z" fill="#41a5ee" /><path d="M5 14h15v4c0 .6-.4 1-1 1H5z" fill="#103f91" /><rect y="5" width="11" height="11" rx="1" fill="#185abd" /><path d="M2 7.500l1.700 6 1.800-5 1.800 5 1.700-6" fill="none" stroke="#fff" strokeWidth="1.400" /></S>, 1],
  [<S><rect x="5" y="0" width="14" height="12" rx="2" fill="#6672e8" /><path d="M8 11h11v7H8z" fill="#4350c9" /><rect x="0" y="7" width="11" height="11" rx="1.500" fill="#4a57e0" /><path d="M3 10l2.500 5L8 10" fill="none" stroke="#fff" strokeWidth="1.200" /><path d="M12 6l4-3" stroke="#3d4ad0" strokeWidth="1.200" /></S>, 1],
];

function Taskbar() {
  return (
    <div className="flex h-[38px] w-full overflow-hidden bg-[linear-gradient(90deg,#dfdbe0_0%,#e8dad8_14%,#e9dcd8_22%,#e7d9da_31%,#eadccf_42%,#e9dccf_55%,#e9dcc9_72%,#ead8cd_80%,#ecd5d4_92%,#dbd5e3_98%,#dcd8e6_100%)]">
      {apps.map(([ic, u], i) => (
        <div key={i} className={"relative flex h-[38px] shrink-0 items-center justify-center " + (i === 0 ? "w-[44px]" : i === 1 ? "w-[49px] pr-[2px]" : "w-[46px]")}>
          {ic}
          {u > 0 && (
            <span className="absolute bottom-0 left-[6px] flex h-[3px] w-[35px] bg-[#0078d7]">
              {u === 2 && <span className="ml-auto h-full w-[10px] bg-[#6aaee6]" />}
            </span>
          )}
        </div>
      ))}
      <div className="ml-auto flex items-center">
        <svg width="61" height="24" viewBox="0 0 61 24" className="shrink-0">
          <path d="M3.500 1.500v5H1.500v6c0 2 2 4 4 4v6h3v-6c2 0 4-2 4-4v-6h-2v-5h-2v5h-3v-5z" fill="#fff" stroke="#8a8785" strokeWidth=".9" />
          <path d="M16 1h40v4h3v13h-3v4H16z" fill="#fff" stroke="#8a8785" strokeWidth="1.200" />
          <rect x="17.500" y="3" width="37" height="17.500" fill="#189647" stroke="#6b6b6b" strokeWidth=".8" />
          <text x="36" y="16.500" textAnchor="middle" fontSize="13.500" fill="#fff" textLength="32" className="font-['Noto_Sans']">100%</text>
        </svg>
        <svg width="18" height="10" viewBox="0 0 18 10" fill="none" stroke="#111" strokeWidth="1.400" className="ml-[6px] shrink-0"><path d="M1 9l8-8 8 8" /></svg>
        <svg width="18" height="20" viewBox="0 0 18 20" className="ml-[11px] shrink-0">
          <path d="M9 0c4 0 5.500 3 5.500 6.500C16 9 18 12 17 14.500l-2-1.500c0 5-12 5-12 0L1 14.500C0 12 2 9 3.500 6.500 3.500 3 5 0 9 0z" fill="#111" />
          <ellipse cx="9" cy="13" rx="5" ry="5" fill="#fff" />
          <path d="M3 8.500c4 2 8 2 12 0l.5 2c-4 2.500-9 2.500-13 0z" fill="#e5222a" />
          <ellipse cx="9" cy="6.500" rx="3.500" ry="1.200" fill="#f6a81c" />
          <circle cx="7.300" cy="3.800" r="1.200" fill="#fff" /><circle cx="10.700" cy="3.800" r="1.200" fill="#fff" />
          <path d="M3 18.500h5M10 18.500h5" stroke="#f6a81c" strokeWidth="2" />
        </svg>
        <svg width="20" height="14" viewBox="0 0 20 14" className="ml-[11px] shrink-0">
          <rect x="7" y="4" width="10" height="7" fill="#111" /><path d="M5 8v5h13.500V2H8" fill="none" stroke="#111" strokeWidth="1" /><path d="M19.500 5v5" stroke="#111" strokeWidth="1" />
          <path d="M1.500 0v2.500M4 0v2.500M.5 2.500h5v2.300c0 1-1 1.500-2.500 1.500S.5 5.500.5 4.500zM3 6v4" fill="none" stroke="#111" strokeWidth="1.100" />
        </svg>
        <svg width="17" height="16" viewBox="0 0 17 16" fill="none" stroke="#333" strokeWidth="1.300" className="ml-[12px] shrink-0">
          <path d="M1 15A14 14 0 0 1 15 1M5 15A10 10 0 0 1 15 5M9 15a6 6 0 0 1 6-6" /><circle cx="14" cy="14" r="1.300" fill="#111" />
        </svg>
        <svg width="20" height="14" viewBox="0 0 20 14" fill="none" stroke="#111" strokeWidth="1.200" className="ml-[10px] shrink-0">
          <path d="M1 4.500h2.500L7.500 1v12l-4-3.500H1zM11.500 3.500l7 7M18.500 3.500l-7 7" />
        </svg>
        <span className="-mt-[2px] ml-[8px] text-[20px] font-medium leading-none text-black">英</span>
        <span className="ml-[17px] flex h-[20px] w-[20px] items-center justify-center border border-[#333] bg-[#f6efee] text-[15px] leading-none text-black">拼</span>
        <T t="13:05" w={40} c="ml-[22px] text-[15px] text-[#1a1a1a]" />
        <svg width="20" height="20" viewBox="0 0 20 20" className="ml-[23px] shrink-0">
          <path d="M0 0h20v16h-7l-3 3.500L7 16H0z" fill="#000" /><path d="M4 4.500h12M4 8h12M4 11.500h8" stroke="#fff" strokeWidth="1.200" />
        </svg>
        <span className="ml-[25px] mr-[6px] h-[38px] w-px bg-[#b9b3bd]" />
      </div>
    </div>
  );
}

export default function App() {
  return (
    <div className="relative flex h-[1080px] w-[1920px] flex-col overflow-hidden bg-white font-['Noto_Sans','Noto_Sans_CJK_SC',sans-serif]">
      <div className="flex h-[1042px] shrink-0">
        <Forensics />
        <Notepad />
      </div>
      <Taskbar />
      <div className="absolute left-[995px] top-[6px] z-20 h-[66px] w-[319px] border-2 border-[#ed1c24]" />
      <div className="absolute left-[145px] top-[510px] z-20 h-[79px] w-[268px] border-2 border-[#ed1c24]" />
      <div className="absolute left-[495px] top-[260px] z-20 h-[88px] w-[309px] border-2 border-[#ed1c24]" />
      <div className="absolute left-[1006px] top-[340px] z-20 h-[95px] w-[724px] border-2 border-[#ed1c24]" />
    </div>
  );
}
